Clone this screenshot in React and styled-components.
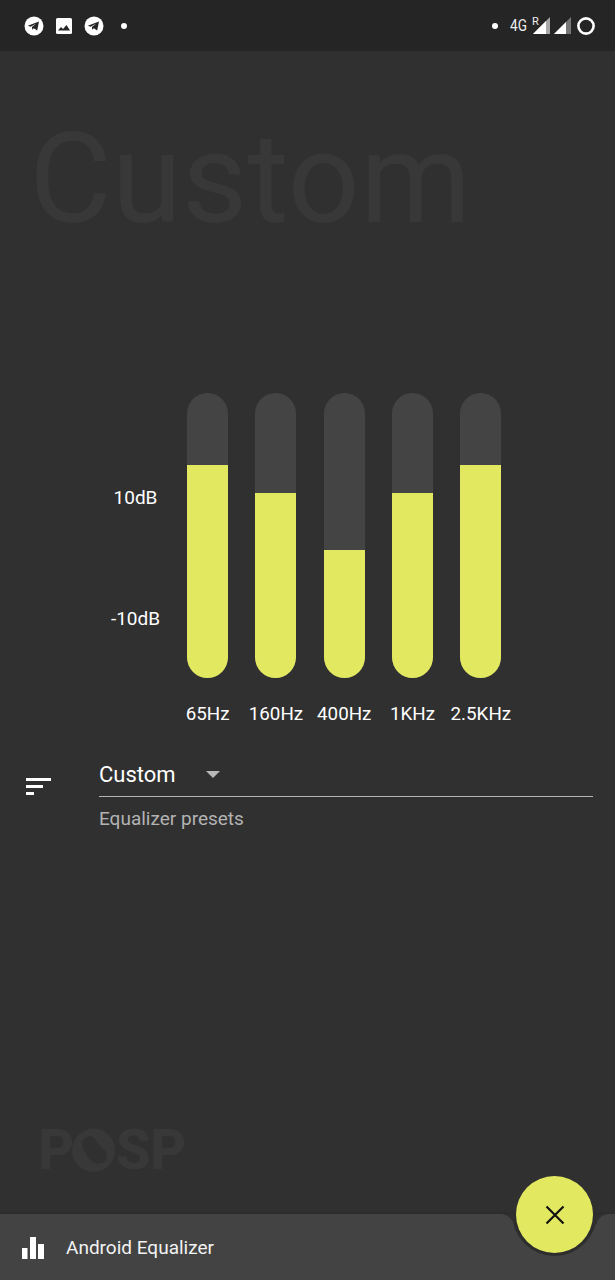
import React from "react"
import styled, { createGlobalStyle } from "styled-components"

const Global = createGlobalStyle`
    html, body {
        margin: 0;
        padding: 0;
        background: #303030;
    }
    * { box-sizing: border-box; }
`

const Page = styled.div`
    width: 615px;
    height: 1280px;
    display: flex;
    flex-direction: column;
    background: #303030;
    color: #fff;
    font-family: Roboto, "Liberation Sans", sans-serif;
    overflow: hidden;
`

const StatusBar = styled.div`
    height: 51px;
    flex-shrink: 0;
    background: #252525;
    display: flex;
    align-items: center;
    justify-content: space-between;
    padding: 0 20px 0 24px;
`
const StatusGroup = styled.div`
    display: flex;
    align-items: center;
`
const StatusIcon = styled.svg`
    flex-shrink: 0;
    margin-left: ${({$gap}) => $gap || 0}px;
`
const Dot = styled.span`
    width: 6px;
    height: 6px;
    border-radius: 50%;
    background: #fff;
    margin-left: ${({$gap}) => $gap || 0}px;
`
const NetLabel = styled.span`
    font-size: 16px;
    color: #eee;
    margin-left: 12px;
    width: 17px;
    white-space: nowrap;
    transform: scaleX(0.85);
    transform-origin: left;
`
const RoamLabel = styled.span`
    font-size: 11px;
    line-height: 11px;
    color: #eee;
    width: 5px;
    margin: -9px -4px 0 5px;
`

const Title = styled.h1`
    margin: 53px 0 0 29px;
    font-size: 127px;
    line-height: 150px;
    font-weight: 400;
    color: #383838;
`

const Equalizer = styled.div`
    display: flex;
    margin: 139px 0 0 107px;
`
const DbLabels = styled.div`
    width: 57px;
    padding-top: 94px;
    display: flex;
    flex-direction: column;
    align-items: center;
    gap: 100px;
    font-size: 19px;
    line-height: 21px;
`
const Bands = styled.div`
    display: flex;
    margin-left: 9.5px;
`
const Band = styled.div`
    width: 68.3px;
    display: flex;
    flex-direction: column;
    align-items: center;
`
const Track = styled.div`
    width: 41px;
    height: 285px;
    border-radius: 20.5px;
    background: #444444;
    display: flex;
    align-items: flex-end;
    overflow: hidden;
`
const Fill = styled.div`
    width: 100%;
    height: ${({$level}) => $level}px;
    background: #e2e961;
`
const BandLabel = styled.span`
    margin-top: 26px;
    font-size: 18.8px;
    line-height: 21px;
    white-space: nowrap;
`

const Presets = styled.div`
    display: flex;
    margin: 36px 22px 0 26px;
`
const PresetIcon = styled.svg`
    width: 25px;
    height: 17px;
    margin-top: 17px;
    flex-shrink: 0;
`
const PresetBody = styled.div`
    flex: 1;
    margin-left: 48px;
`
const Select = styled.div`
    height: 36px;
    display: flex;
    align-items: center;
    border-bottom: 1px solid #b4b4b4;
    font-size: 22px;
    padding-bottom: 8px;
`
const Caret = styled.span`
    width: 0;
    height: 0;
    border-left: 7.5px solid transparent;
    border-right: 7.5px solid transparent;
    border-top: 7px solid #b8b8b8;
    margin-left: 30px;
`
const Hint = styled.div`
    margin-top: 11px;
    font-size: 19px;
    line-height: 22px;
    color: #b3b3b3;
`

const Logo = styled.div`
    display: flex;
    margin: auto 0 43px 38px;
    height: 41px;
    font-size: 56px;
    line-height: 41px;
    font-weight: 800;
    color: #383838;
`
const LogoLetter = styled.span`
    position: relative;
    width: ${({$width}) => $width}px;
    text-align: ${({$center}) => ($center ? "center" : "left")};
`
const LogoSeed = styled.svg`
    position: absolute;
    left: 0;
    top: -1px;
    width: 43px;
    height: 43px;
`

const BottomBar = styled.div`
    position: relative;
    height: 66px;
    flex-shrink: 0;
    background: #434343;
    display: flex;
    align-items: center;
    padding-left: 22px;
    box-shadow: 0 -1px 2px rgba(0, 0, 0, 0.12);
`
const BarIcon = styled.svg`
    margin-top: 1px;
`
const BarLabel = styled.span`
    margin-left: 22px;
    font-size: 19px;
    color: #f2f2f2;
`
// the cradle the button sits in, cut out of the bar's top edge
const Notch = styled.div`
    position: absolute;
    inset: 0;
    overflow: hidden;
    &::before {
        content: "";
        position: absolute;
        left: 512px;
        top: -43px;
        width: 85px;
        height: 85px;
        border-radius: 50%;
        background: #2d2d2d;
    }
`
const Shoulder = styled.span`
    position: absolute;
    top: 0;
    left: ${({$left}) => $left}px;
    width: 13px;
    height: 13px;
    background: radial-gradient(circle at ${({$side}) => $side} 100%, #434343 12.5px, #303030 13px);
`
const Fab = styled.button`
    position: absolute;
    top: -38px;
    right: 22px;
    width: 77px;
    height: 77px;
    border: 0;
    padding: 0;
    border-radius: 50%;
    background: #e2e961;
    display: flex;
    align-items: center;
    justify-content: center;
`

function Telegram({gap}) {
    return (
        <StatusIcon $gap={gap} width="20" height="20" viewBox="0 0 20 20">
            <circle cx="10" cy="10" r="9.5" fill="#fff" />
            <path d="M3.8 9.8 15 5.4 13.2 14.6 9.8 12.3 8.3 13.8 7.9 11.1 12.4 7.4 6.6 10.7Z" fill="#252525" />
        </StatusIcon>
    )
}

function Picture({gap}) {
    return (
        <StatusIcon $gap={gap} width="16" height="16" viewBox="0 0 16 16">
            <rect width="16" height="16" rx="1.5" fill="#fff" />
            <path d="M2 12.5 5 9 7 11 10.5 7 14 12.5Z" fill="#252525" />
        </StatusIcon>
    )
}

function Signal({back, level, gap}) {
    return (
        <StatusIcon $gap={gap} width="17" height="17" viewBox="0 0 17 17">
            <path d="M17 0V17H0Z" fill={back} />
            <path d={`M${level} ${17 - level}V17H0Z`} fill="#fff" />
        </StatusIcon>
    )
}

const bands = [
    {label: "65Hz", level: 213.5},
    {label: "160Hz", level: 185},
    {label: "400Hz", level: 128},
    {label: "1KHz", level: 185},
    {label: "2.5KHz", level: 213.5},
]

export default function App() {
    return (
        <Page>
            <Global />
            <StatusBar>
                <StatusGroup>
                    <Telegram />
                    <Picture gap={12} />
                    <Telegram gap={12} />
                    <Dot $gap={17} />
                </StatusGroup>
                <StatusGroup>
                    <Dot />
                    <NetLabel>4G</NetLabel>
                    <RoamLabel>R</RoamLabel>
                    <Signal back="#a8a8a8" level={13} />
                    <Signal back="#767676" level={12} gap={4} />
                    <StatusIcon $gap={6} width="18" height="18" viewBox="0 0 18 18">
                        <circle cx="9" cy="9" r="7.6" fill="none" stroke="#fff" strokeWidth="2.6" />
                    </StatusIcon>
                </StatusGroup>
            </StatusBar>

            <Title>Custom</Title>

            <Equalizer>
                <DbLabels>
                    <span>10dB</span>
                    <span>-10dB</span>
                </DbLabels>
                <Bands>
                    {bands.map((b) => (
                        <Band key={b.label}>
                            <Track><Fill $level={b.level} /></Track>
                            <BandLabel>{b.label}</BandLabel>
                        </Band>
                    ))}
                </Bands>
            </Equalizer>

            <Presets>
                <PresetIcon viewBox="0 0 25 17">
                    <rect x="0" y="0" width="25" height="3" fill="#fff" />
                    <rect x="0" y="7" width="17" height="3" fill="#fff" />
                    <rect x="0" y="14" width="8" height="3" fill="#fff" />
                </PresetIcon>
                <PresetBody>
                    <Select>Custom<Caret /></Select>
                    <Hint>Equalizer presets</Hint>
                </PresetBody>
            </Presets>

            <Logo>
                <LogoLetter $width={34}>P</LogoLetter>
                <LogoLetter $width={44} $center>
                    O
                    <LogoSeed viewBox="0 0 43 43">
                        <circle cx="21.5" cy="21.5" r="21.5" fill="#383838" />
                        <path d="M13 9C18 5 23 8 25 13C27 18 34 20 35 27C35 33 28 36 23 34C17 32 15 26 12 21C10 17 9 12 13 9Z" fill="#303030" />
                    </LogoSeed>
                </LogoLetter>
                <LogoLetter $width={34}>S</LogoLetter>
                <LogoLetter $width={36}>P</LogoLetter>
            </Logo>

            <BottomBar>
                <BarIcon width="22" height="22" viewBox="0 0 22 22">
                    <rect x="0" y="11" width="5.5" height="11" fill="#fff" />
                    <rect x="8" y="0" width="6" height="22" fill="#fff" />
                    <rect x="16" y="7" width="6" height="15" fill="#fff" />
                </BarIcon>
                <BarLabel>Android Equalizer</BarLabel>
                <Notch>
                    <Shoulder $left={501} $side="0" />
                    <Shoulder $left={596} $side="100%" />
                </Notch>
                <Fab aria-label="close">
                    <svg width="20" height="20" viewBox="0 0 20 20">
                        <path d="M1.5 1.5 18.5 18.5M18.5 1.5 1.5 18.5" stroke="#111" strokeWidth="2.2" fill="none" />
                    </svg>
                </Fab>
            </BottomBar>
        </Page>
    )
}
